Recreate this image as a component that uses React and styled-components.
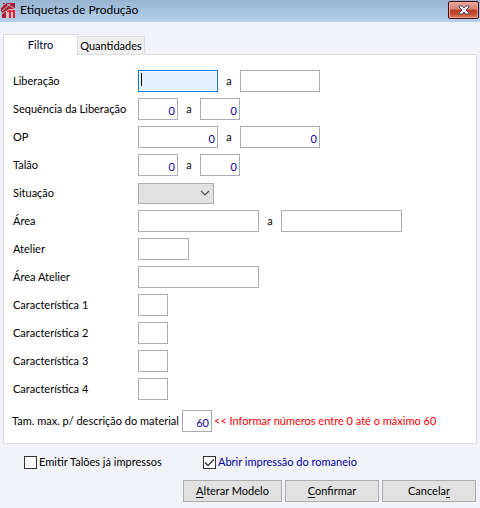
import React from "react";
import styled, { createGlobalStyle, css } from "styled-components";

const GlobalStyle = createGlobalStyle`
  *, *::before, *::after { box-sizing: border-box; }
  body {
    margin: 0;
    background: #f2f3f9;
    color: #000;
    font: 11px/16px Lato, "Noto Sans", sans-serif;
  }
  input, select, button { font: inherit; color: inherit; margin: 0; border-radius: 0; }
`;

const Dialog = styled.main`
  display: flex;
  flex-direction: column;
  min-height: 100vh;
  white-space: nowrap;
`;

const TitleBar = styled.header`
  display: flex;
  align-items: center;
  gap: 4px;
  height: 22px;
  padding: 0 1px 2px;
  background: linear-gradient(#99b4d1, #b7d1ec);
`;

const Title = styled.h1`
  flex: 1;
  margin: 0;
  font-size: 12px;
  font-weight: 400;
`;

const CloseButton = styled.button`
  display: flex;
  align-items: center;
  justify-content: center;
  width: 31px;
  height: 18px;
  padding: 0 0 1px;
  border: 1px solid #46131d;
  border-radius: 2px;
  background: linear-gradient(#e5a79b, #d98373 45%, #b93c26 50%, #c64d31 75%, #dd8263);
  box-shadow: inset 0 0 0 1px #e6a292;
`;

const Tabs = styled.div`
  display: flex;
  align-items: flex-end;
  margin: 12px 3px 0;
`;

const Tab = styled.button`
  position: relative;
  border: 1px solid #dcdcdc;
  border-bottom: 0;
  padding: 0;
  ${({ $active }) => $active ? css`
    width: 75px;
    height: 21px;
    margin-bottom: -1px;
    background: #fff;
    color: #000040;
    z-index: 1;
  ` : css`
    width: 68px;
    height: 18px;
    margin-left: -1px;
    background: #f0f0f0;
  `}
`;

const Panel = styled.section`
  display: flex;
  flex-direction: column;
  gap: 6px;
  margin: 0 3px;
  padding: 15px 9px 11px;
  border: 1px solid #dcdcdc;
  background: #fff;
`;

const Row = styled.div`
  display: flex;
  align-items: center;
  min-height: 22px;
`;

const Label = styled.label`
  width: 125px;
`;

const Separator = styled.span`
  width: 22px;
  text-align: center;
`;

const WIDTHS = { mini: "30px", small: "40px", code: "51px", medium: "80px", large: "121px" };

const Field = styled.input`
  width: ${({ $size }) => WIDTHS[$size]};
  height: 22px;
  padding: 2px 2px 0;
  border: 1px solid #abadb3;
  outline: 0;
  background: #fff;
  color: #0b0090;
  text-align: ${({ $numeric }) => ($numeric ? "right" : "left")};
  ${({ $current }) => $current && css`
    border-color: #0078d7;
    box-shadow: inset 0 0 0 1px #fff;
    background: linear-gradient(#000, #000) 2px 2px / 1px 13px no-repeat, #e5f1ff;
    caret-color: transparent;
  `}
`;

const SelectBox = styled.div`
  display: grid;
  align-items: center;
  width: 76px;

  > * { grid-area: 1 / 1; }
  > svg { justify-self: end; margin-right: 4px; pointer-events: none; }
`;

const Select = styled.select`
  appearance: none;
  width: 100%;
  height: 21px;
  padding: 0 16px 0 3px;
  border: 1px solid #adadad;
  background: #e1e1e1;
`;

const LimitRow = styled(Row)`
  margin-top: 4px;
  margin-left: -1px;
`;

const LimitLabel = styled.label`
  width: 170px;
`;

const Hint = styled.span`
  margin-left: 2px;
  color: #f00;
`;

const Options = styled.div`
  display: grid;
  grid-template-columns: 179px 1fr;
  margin: 10px 24px 0;
`;

const Option = styled.label`
  display: flex;
  align-items: center;
  gap: 2px;
  color: ${({ $accent }) => ($accent ? "#0000a0" : "#000")};
`;

const CheckFrame = styled.span`
  display: grid;
  width: 13px;
  height: 13px;

  > * { grid-area: 1 / 1; }
  > svg { pointer-events: none; visibility: hidden; }
  > input:checked + svg { visibility: visible; }
`;

const Checkbox = styled.input`
  appearance: none;
  width: 13px;
  height: 13px;
  border: 1px solid #333;
  background: #fff;
`;

const Actions = styled.footer`
  display: flex;
  justify-content: flex-end;
  gap: 3px;
  margin: 10px 4px 5px;
`;

const ActionButton = styled.button`
  width: ${({ $wide }) => ($wide ? "99px" : "94px")};
  height: 22px;
  padding: 0;
  border: 1px solid #adadad;
  background: #e1e1e1;

  u { text-underline-offset: 2px; }
`;

const Logo = () => (
  <svg width="15" height="17" viewBox="0 0 15 17" aria-hidden="true">
    <path d="M2 1h12v7H7l-2 2v6H1v-6L0 9V6l2-2z" fill="#b01f2d" />
    <path d="M0 5l5-4M1 9l8-7M6 2l8 5M1 12l4-3" stroke="#aebfd6" fill="none" />
    <path d="M5 9l3-2h6v9H5z" fill="#d8c3d2" />
    <path d="M6 9l2-1h2v8H8v-6H6zM10 9l2-1h2v8h-2v-6h-2z" fill="#df1f2c" />
  </svg>
);

const CloseIcon = () => (
  <svg width="12" height="10" viewBox="0 0 12 10" aria-hidden="true">
    <path d="M1 1h3l2 2 2-2h3v1L8 5l3 3v1H8L6 7 4 9H1V8l3-3-3-3z" fill="#f7f7f7" stroke="#4c5366" />
  </svg>
);

const Chevron = () => (
  <svg width="10" height="6" viewBox="0 0 10 6" fill="none" aria-hidden="true">
    <path d="M1 1l4 4 4-4" stroke="#505050" strokeWidth="1.200" />
  </svg>
);

const CheckMark = () => (
  <svg width="13" height="13" viewBox="0 0 13 13" fill="none" aria-hidden="true">
    <path d="M2 6.500L5 9.500 11 3.500" stroke="#333" strokeWidth="1.300" />
  </svg>
);

const FILTERS = [
  { id: "liberacao", label: "Liberação", size: "medium", range: true, current: true },
  { id: "sequencia", label: "Sequência da Liberação", size: "small", range: true, value: "0" },
  { id: "op", label: "OP", size: "medium", range: true, value: "0" },
  { id: "talao", label: "Talão", size: "small", range: true, value: "0" },
  { id: "situacao", label: "Situação", select: true },
  { id: "area", label: "Área", size: "large", range: true },
  { id: "atelier", label: "Atelier", size: "code" },
  { id: "area-atelier", label: "Área Atelier", size: "large" },
  { id: "caracteristica-1", label: "Característica 1", size: "mini" },
  { id: "caracteristica-2", label: "Característica 2", size: "mini" },
  { id: "caracteristica-3", label: "Característica 3", size: "mini" },
  { id: "caracteristica-4", label: "Característica 4", size: "mini" },
];

function FilterRow({ id, label, size, range, value = "", select, current }) {
  return (
    <Row>
      <Label htmlFor={id}>{label}</Label>
      {select ? (
        <SelectBox>
          <Select id={id}><option value="" /></Select>
          <Chevron />
        </SelectBox>
      ) : (
        <Field id={id} $size={size} $numeric={value !== ""} $current={current} defaultValue={value} />
      )}
      {range && (
        <>
          <Separator id={`${id}-ate`}>a</Separator>
          <Field aria-labelledby={`${id}-ate`} $size={size} $numeric={value !== ""} defaultValue={value} />
        </>
      )}
    </Row>
  );
}

function CheckOption({ children, accent, checked }) {
  return (
    <Option $accent={accent}>
      <CheckFrame>
        <Checkbox type="checkbox" defaultChecked={checked} />
        <CheckMark />
      </CheckFrame>
      {children}
    </Option>
  );
}

export default function App() {
  return (
    <>
      <GlobalStyle />
      <Dialog>
        <TitleBar>
          <Logo />
          <Title>Etiquetas de Produção</Title>
          <CloseButton type="button" aria-label="Fechar"><CloseIcon /></CloseButton>
        </TitleBar>
        <Tabs role="tablist">
          <Tab type="button" role="tab" aria-selected="true" $active>Filtro</Tab>
          <Tab type="button" role="tab" aria-selected="false">Quantidades</Tab>
        </Tabs>
        <Panel role="tabpanel">
          {FILTERS.map((filter) => <FilterRow key={filter.id} {...filter} />)}
          <LimitRow>
            <LimitLabel htmlFor="tamanho">Tam. max. p/ descrição do material</LimitLabel>
            <Field id="tamanho" $size="mini" $numeric defaultValue="60" />
            <Hint>&lt;&lt; Informar números entre 0 até o máximo 60</Hint>
          </LimitRow>
        </Panel>
        <Options>
          <CheckOption>Emitir Talões já impressos</CheckOption>
          <CheckOption accent checked>Abrir impressão do romaneio</CheckOption>
        </Options>
        <Actions>
          <ActionButton type="button" $wide><u>A</u>lterar Modelo</ActionButton>
          <ActionButton type="button"><u>C</u>onfirmar</ActionButton>
          <ActionButton type="button">Cancela<u>r</u></ActionButton>
        </Actions>
      </Dialog>
    </>
  );
}
